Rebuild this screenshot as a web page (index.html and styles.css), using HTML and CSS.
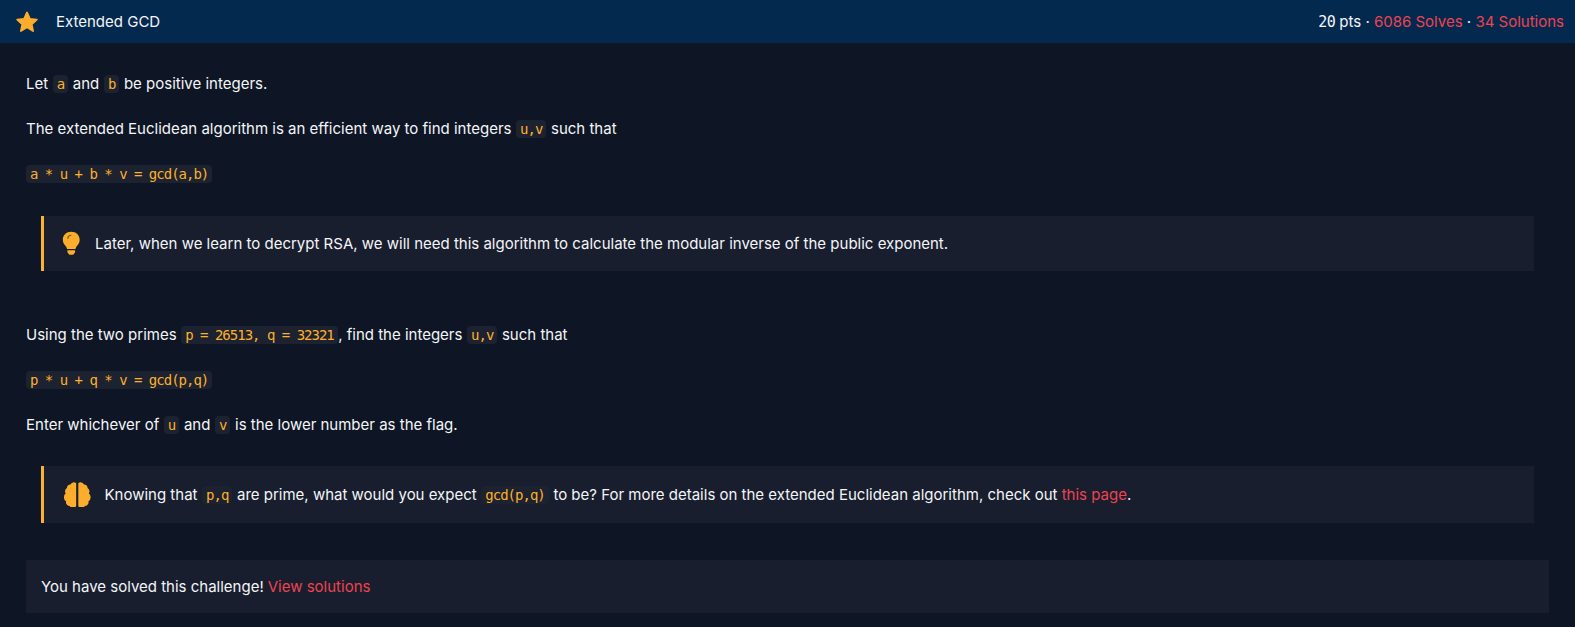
FILE: index.html
```html
<!DOCTYPE html>
<html lang="en">
<head>
<meta charset="utf-8">
<title>Extended GCD</title>
<link rel="stylesheet" href="styles.css">
</head>
<body>
<header class="bar">
  <div class="bar-left">
    <svg class="star" viewBox="0 0 24 24" aria-hidden="true"><path d="M12 2.500l2.900 6.300 6.900.8-5.100 4.700 1.400 6.800L12 17.200l-6.100 3.900 1.400-6.800-5.100-4.700 6.900-.8z"/></svg>
    <span>Extended GCD</span>
  </div>
  <div class="bar-right"><span class="num">20</span> pts · <a>6086 Solves</a> · <a>34 Solutions</a></div>
</header>
<main class="content">
  <p>Let <code>a</code> and <code>b</code> be positive integers.</p>
  <p>The extended Euclidean algorithm is an efficient way to find integers <code>u,v</code> such that</p>
  <p><code class="block">a * u + b * v = gcd(a,b)</code></p>
  <aside class="note note-a">
    <svg class="bulb" viewBox="0 0 24 32" aria-hidden="true"><path d="M12 1C5.600 1 1 5.600 1 11.400c0 3 1.100 5 2.600 6.800 1.300 1.600 2.500 3.100 2.900 5.300h11c.4-2.200 1.600-3.700 2.900-5.300C21.900 16.400 23 14.400 23 11.400 23 5.600 18.400 1 12 1z"/><path d="M7 25h10v2.500c0 .8-.5 1.500-1.200 1.800L14.500 31h-5l-1.300-1.700C7.500 29 7 28.300 7 27.500z"/><path class="bulb-line" d="M7.500 10c0-2.600 2-4.500 4.500-4.500"/></svg>
    <span>Later, when we learn to decrypt RSA, we will need this algorithm to calculate the modular inverse of the public exponent.</span>
  </aside>
  <p class="after-note">Using the two primes <code>p = 26513, q = 32321</code>, find the integers <code>u,v</code> such that</p>
  <p><code class="block">p * u + q * v = gcd(p,q)</code></p>
  <p>Enter whichever of <code>u</code> and <code>v</code> is the lower number as the flag.</p>
  <aside class="note note-b">
    <svg class="brain" viewBox="0 0 32 28" aria-hidden="true"><path d="M14.800 1.500v25a3.800 3.800 0 0 1-7.200 0.500A4.500 4.500 0 0 1 3.400 21.500 5 5 0 0 1 1 17a5 5 0 0 1 2-4 4.800 4.800 0 0 1 1.400-6.200A4.200 4.200 0 0 1 8.400 2.800 3.900 3.900 0 0 1 14.800 1.500z"/><path d="M17.200 1.500v25a3.800 3.800 0 0 0 7.200 0.500 4.500 4.500 0 0 0 4.200-5.500A5 5 0 0 0 31 17a5 5 0 0 0-2-4 4.800 4.800 0 0 0-1.400-6.200 4.200 4.200 0 0 0-4-4A3.900 3.900 0 0 0 17.200 1.500z"/></svg>
    <span>Knowing that <code>p,q</code> are prime, what would you expect <code>gcd(p,q)</code> to be? For more details on the extended Euclidean algorithm, check out <a>this page</a>.</span>
  </aside>
  <div class="solved">You have solved this challenge! <a>View solutions</a></div>
</main>
</body>
</html>
```
FILE: styles.css
```css
* { box-sizing: border-box; }
html, body { margin: 0; height: 100%; }
body { background: #0e1525; color: #f4f5f7; font: 15px/24px Inter, "Noto Sans", sans-serif; overflow: hidden; }
a { color: #ee4350; }
.bar { height: 43px; background: #03294f; display: flex; justify-content: space-between; align-items: center; padding: 0 11px 0 15px; }
.bar-left { display: flex; align-items: center; gap: 17px; }
.star { width: 24px; height: 24px; fill: #fbad2b; stroke: #fbad2b; stroke-width: 1.800; stroke-linejoin: round; }
.num { font-family: "DejaVu Sans Mono", monospace; font-size: 15px; letter-spacing: -.6px; }
.content { padding: 29px 26px 0 26px; }
p { margin: 0 0 21px; }
code { font: 14px/17px "DejaVu Sans Mono", monospace; letter-spacing: -1px; color: #fdb02c; background: #1c222f; border-radius: 4px; padding: 1px 4px; margin: 0 .4px; }
code.block { margin: 0; }
.note { display: flex; align-items: center; background: #181e2e; border-left: 3px solid #fbb02e; margin: 0 15px; padding: 0 20px; }
.note-a { height: 55px; margin-top: 30px; margin-bottom: 52px; gap: 14.500px; padding-left: 18px; }
.note-b { height: 57px; margin-top: 29px; gap: 13.500px; padding-left: 18.500px; }
.after-note { margin-top: 0; }
.bulb { width: 18.500px; height: 24.500px; fill: #fbad2b; }
.bulb-line { fill: none; stroke: #7a5415; stroke-width: 1.500; }
.brain { width: 28.500px; height: 25px; fill: #fbad2b; }
.solved { margin-top: 37px; background: #181e2e; height: 53px; display: flex; align-items: center; gap: 4px; padding-left: 15px; }
```
